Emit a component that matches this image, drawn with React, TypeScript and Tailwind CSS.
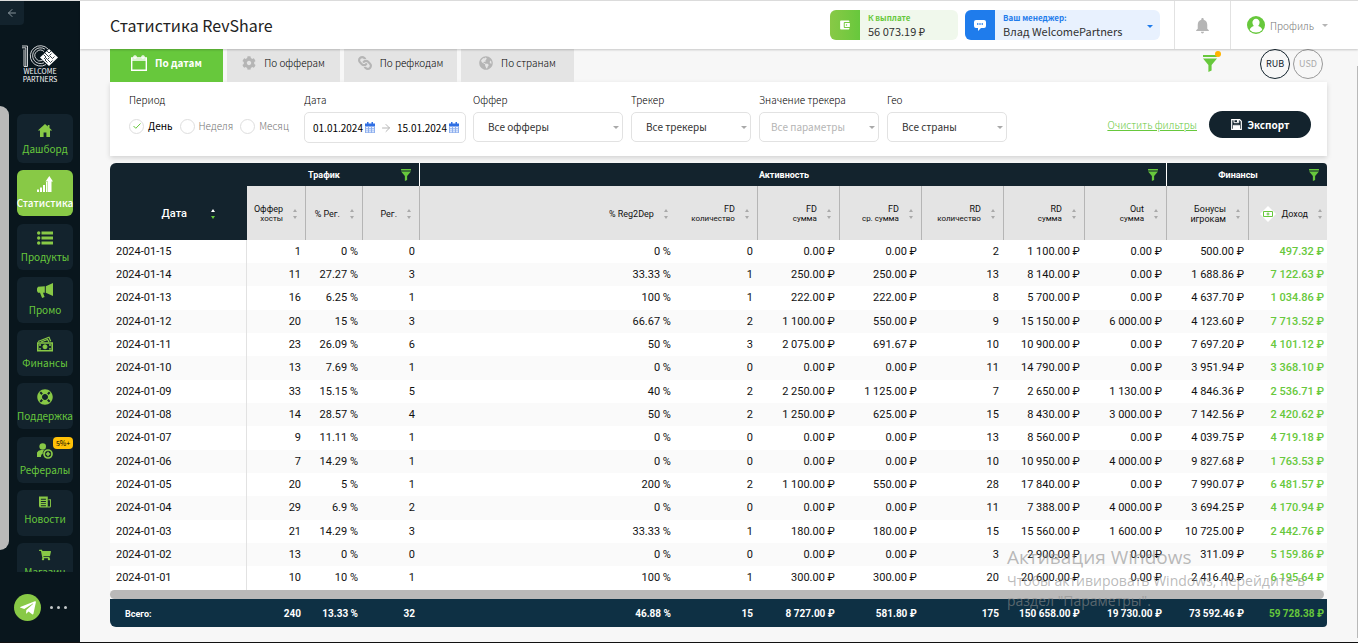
import React, { useState } from 'react';
import { FaCog, FaLink, FaGlobeAmericas, FaShoppingCart, FaTelegramPlane, FaLifeRing } from 'react-icons/fa';
import { IoMdWallet } from 'react-icons/io';
import { MdNotifications } from 'react-icons/md';
import { ArrowLeft, ArrowRight } from 'lucide-react';
import clsx from 'clsx';

type SvgProps = { className?: string };

const FunnelIcon: React.FC<SvgProps> = ({ className }) => (
  <svg viewBox="0 0 14 17" className={className} fill="currentColor">
    <path d="M0 0h14v2H0zM0 3.5h14L8.6 10v5.5L5.4 17v-7z" />
  </svg>
);

const HomeIcon: React.FC<SvgProps> = ({ className }) => (
  <svg viewBox="0 0 16 16" className={className} fill="currentColor">
    <path d="M8 2 .8 8.600H3V15h3.600v-4.500h2.800V15H13V8.600h2.200L12.500 6V3h-1.700v1.500z" />
  </svg>
);

const ListIcon: React.FC<SvgProps> = ({ className }) => (
  <svg viewBox="0 0 16 16" className={className} fill="currentColor">
    <circle cx="1.700" cy="3" r="1.700" />
    <circle cx="1.700" cy="8" r="1.700" />
    <circle cx="1.700" cy="13" r="1.700" />
    <path d="M4.500 1.500H16v3H4.500zM4.500 6.500H16v3H4.500zM4.500 11.500H16v3H4.500z" />
  </svg>
);

const StatsIcon: React.FC<SvgProps> = ({ className }) => (
  <svg viewBox="0 0 16 16" className={className} fill="currentColor">
    <path d="M0 13.500h2V16H0zM3 11.500h2V16H3zM6 9h2v7H6zM9 6h1.500v10H9zM8.500 5.500 12.300 0 16 5.500h-1.500V16h-3.500V5.500z" />
  </svg>
);

const MegaphoneIcon: React.FC<SvgProps> = ({ className }) => (
  <svg viewBox="0 0 16 16" className={className} fill="currentColor">
    <path d="M8.8 3.2 16 0v13L8.8 9.8zM0 5.5l1-1.8 6.8-.5v6.6H6l1.6 4.2-2.5 1L3 9.8H1L0 8z" />
  </svg>
);

const MoneyIcon: React.FC<SvgProps> = ({ className }) => (
  <svg viewBox="0 0 16 15" className={className} fill="none" stroke="currentColor">
    <path d="M1 5 12 .8l1.7 4M4 5.5 10.5 3l1.5 2.6" strokeWidth="1.2" />
    <path d="M.8 6.5h14.4v7.7H.8z" strokeWidth="1.6" />
    <circle cx="8" cy="10.3" r="2" fill="currentColor" />
    <path d="M2 8.5h2M12 8.5h2M2 12.4h2M12 12.4h2" strokeWidth="1.4" />
  </svg>
);

const ReferralIcon: React.FC<SvgProps> = ({ className }) => (
  <svg viewBox="0 0 16 16" className={className} fill="currentColor">
    <circle cx="5.7" cy="3.5" r="3.3" />
    <path d="M0 14V9.5Q1 7 4 7h3q-1.5 2-1.4 4Q4 11 4 14z" />
    <circle cx="11" cy="11" r="4" fill="none" stroke="currentColor" strokeWidth="1.7" />
    <path d="M10.2 8.8h1.6v1.4h1.4v1.6h-1.4v1.4h-1.6v-1.4H8.8v-1.6h1.4z" />
  </svg>
);

const NewsIcon: React.FC<SvgProps> = ({ className }) => (
  <svg viewBox="0 0 13 12" className={className} fill="currentColor">
    <path fillRule="evenodd" d="M0 0h9.5v12H2a2 2 0 0 1-2-2zM2 2.5v1h5.5v-1zM2 5v1h5.5V5zM2 7.3v1h5.5v-1zM2 9.6v1h5.5v-1z" />
    <path d="M10.2 3H13v7.5q0 1.5-1.5 1.5H9.6v-1H12V4h-1.8z" />
  </svg>
);

const ChatIcon: React.FC<SvgProps> = ({ className }) => (
  <svg viewBox="0 0 12 11" className={className} fill="currentColor">
    <path
      fillRule="evenodd"
      d="M2 0h8q2 0 2 2v4q0 2-2 2H7L4 11V8H2Q0 8 0 6V2q0-2 2-2zm1 3.300v1.400h1.400V3.300zm2.300 0v1.400h1.400V3.300zm2.300 0v1.400H9V3.300z"
    />
  </svg>
);

const ProfileIcon: React.FC<SvgProps> = ({ className }) => (
  <svg viewBox="0 0 18 18" className={className}>
    <circle cx="9" cy="9" r="9" fill="#67c83c" />
    <path
      d="M9 2.800a3.600 3.600 0 0 1 3.600 3.800q0 2-1.400 3.400Q15 11.300 15.200 14q-2.400 2.600-6.200 2.600T2.800 14Q3 11.300 6.800 10 5.400 8.600 5.400 6.600A3.600 3.600 0 0 1 9 2.800z"
      fill="#fff"
    />
  </svg>
);

const CalendarIcon: React.FC<SvgProps> = ({ className }) => (
  <svg viewBox="0 0 16 16" className={className} fill="none" stroke="currentColor">
    <path d="M.7 3h14.6v12.3H.7zM.7 5h14.6" strokeWidth="1.4" />
    <circle cx="4" cy="2" r="1.2" strokeWidth="1.2" />
    <circle cx="12" cy="2" r="1.2" strokeWidth="1.2" />
  </svg>
);

const ChainIcon: React.FC<SvgProps> = ({ className }) => <FaLink className={clsx('rotate-90', className)} />;

const DateIcon: React.FC<SvgProps> = ({ className }) => (
  <svg viewBox="0 0 10 11" className={className}>
    <path d="M0 2h10v9H0z" fill="#8fb0ee" />
    <path d="M0 1.5h10V4H0zM2 0h1.5v3H2zM6.5 0H8v3H6.5z" fill="#2f6fe4" />
    <path d="M1 5h2v1.3H1zM4 5h2v1.3H4zM7 5h2v1.3H7zM1 7.2h2v1.3H1zM4 7.2h2v1.3H4zM7 7.2h2v1.3H7zM1 9.3h2v1H1zM4 9.3h2v1H4zM7 9.3h2v1H7z" fill="#eef3ff" />
  </svg>
);

const SaveIcon: React.FC<SvgProps> = ({ className }) => (
  <svg viewBox="0 0 11 11" className={className} fill="none" stroke="#fff">
    <path d="M.7.7h8l1.6 1.6v8H.7z" strokeWidth="1.2" />
    <path d="M3 .7v3h4.7v-3M2.5 10V6.3h6V10" />
    <path d="M6 1h1.4v2H6zM3 7h5v3H3z" fill="#fff" stroke="none" />
  </svg>
);

const Caret: React.FC<SvgProps> = ({ className }) => (
  <svg viewBox="0 0 6 3" className={clsx('w-1.5 h-[3px] shrink-0', className)} fill="currentColor">
    <path d="M0 0h6L3 3z" />
  </svg>
);

const Sorter: React.FC<{ active?: boolean }> = ({ active }) => (
  <svg viewBox="0 0 4 10" className="w-1 h-2.5 shrink-0">
    <path d="M0 3 2 0l2 3z" fill={active ? '#fff' : '#a9a9a9'} />
    <path d="M0 7h4l-2 3z" fill={active ? '#67c83c' : '#a9a9a9'} />
  </svg>
);

const Logo: React.FC = () => (
  <div className="mx-auto w-9 text-white">
    <svg viewBox="0 0 36 22" className="w-9 h-[22px]" fill="none" stroke="currentColor" strokeWidth=".8">
      <path d="M0 1h5.500v20.500M0 2.800h3.800v18.700M2 4.500v17h3.500" />
      <path d="M26 4A10.200 10.200 0 1 0 24 19.500M23 4.200A7.900 7.900 0 1 0 22 17.800M22 6.600A5.400 5.400 0 1 0 20.500 15.500" />
      <path d="m27 4 9 8.500-9 8.500-9-8.500z" fill="currentColor" stroke="none" />
      <path
        d="m25 6 2 2 2-2M23 8l4 4M21.500 9.500l2.500 2.500-2 2M29.500 8.500l-2 2 3 3 2-2M25 13l-2 2 2.500 2.500M27.500 12.500l-2 2 3 3 2-2"
        stroke="#09161d"
      />
    </svg>
    <p className="text-[7px] leading-2 text-center whitespace-nowrap">
      WELCOME
      <br />
      PARTNERS
    </p>
  </div>
);

interface MenuItem {
  label: string;
  icon: React.FC<SvgProps>;
  size: string;
  badge?: string;
}

const menu: MenuItem[] = [
  { label: 'Дашборд', icon: HomeIcon, size: 'w-4 h-4' },
  { label: 'Статистика', icon: StatsIcon, size: 'w-4 h-4' },
  { label: 'Продукты', icon: ListIcon, size: 'w-4 h-4' },
  { label: 'Промо', icon: MegaphoneIcon, size: 'w-4 h-4' },
  { label: 'Финансы', icon: MoneyIcon, size: 'w-4 h-4' },
  { label: 'Поддержка', icon: FaLifeRing, size: 'w-4 h-4' },
  { label: 'Рефералы', icon: ReferralIcon, size: 'w-4 h-4', badge: '5%+' },
  { label: 'Новости', icon: NewsIcon, size: 'w-3 h-3' },
  { label: 'Магазин', icon: FaShoppingCart, size: 'w-3 h-3' }
];

const Sidebar: React.FC = () => (
  <aside className="relative w-20 shrink-0 bg-[#09161d] flex flex-col">
    <button aria-label="Свернуть меню" className="w-6 h-6 bg-[#13232d] text-[#87949b] rounded-br flex items-center justify-center">
      <ArrowLeft className="w-3 h-3" strokeWidth={2} />
    </button>
    <div className="h-[89px] pt-5">
      <Logo />
    </div>
    <div className="absolute left-0 top-[105px] w-[9px] h-[444px] rounded-r-full bg-[#b9b9b9]" />
    <nav className="h-[458px] overflow-hidden pl-[17px]">
      <div className="h-[475px] w-14 flex flex-col justify-between">
        {menu.map(({ label, icon: Icon, size, badge }, i) => (
          <a
            key={label}
            href="#"
            className={clsx(
              'relative shrink-0 rounded-md flex flex-col items-center text-[10px] leading-3 whitespace-nowrap',
              i === 0 ? 'h-[49px] pt-2' : 'h-[46px] pt-1.5',
              i === 1 ? 'bg-[#88c946] text-white font-medium' : 'bg-[#13232d] text-[#67c83c]'
            )}
          >
            <Icon className={clsx('mb-[5px]', size, i === 1 ? 'text-white' : 'text-[#88c946]')} />
            {label}
            {badge && (
              <span className="absolute top-0 right-0 w-5 h-3 rounded-sm bg-[#ffc107] text-black text-[7px] leading-3 text-center">
                {badge}
              </span>
            )}
          </a>
        ))}
      </div>
    </nav>
    <div className="mt-[22px] ml-3.5 flex items-center gap-[7px]">
      <a href="#" aria-label="Telegram" className="w-[27px] h-[27px] rounded-full bg-[#88c946] text-white flex items-center justify-center">
        <FaTelegramPlane className="w-[18px] h-[18px]" />
      </a>
      <button aria-label="Ещё" className="flex gap-1 p-0.5">
        <span className="w-[3px] h-[3px] rounded-full bg-[#c4c8ca]" />
        <span className="w-[3px] h-[3px] rounded-full bg-[#c4c8ca]" />
        <span className="w-[3px] h-[3px] rounded-full bg-[#c4c8ca]" />
      </button>
    </div>
  </aside>
);

const Header: React.FC = () => (
  <header className="relative z-10 h-12 bg-white shadow-[0_1px_2px_rgba(0,0,0,0.2)] pl-[30px] flex items-center">
    <h1 className="text-base leading-6 text-[#222] flex-1">Статистика RevShare</h1>
    <div className="w-32 h-[30px] rounded-md overflow-hidden bg-[#f0f8ec] flex">
      <span className="w-[30px] bg-linear-to-r from-[#88c946] to-[#67c83c] text-white flex items-center justify-center">
        <IoMdWallet className="w-3 h-3" />
      </span>
      <div className="pl-2 pt-0.5">
        <p className="text-[8px] leading-3 font-bold text-[#67c83c]">К выплате</p>
        <p className="text-[11px] leading-[14px] text-[#333]">56 073.19 ₽</p>
      </div>
    </div>
    <button className="ml-[7px] w-[195px] h-[30px] rounded-md overflow-hidden bg-[#e8f1fe] flex text-left">
      <span className="w-[30px] h-full bg-[#1f7cec] text-white flex items-center justify-center">
        <ChatIcon className="w-3 h-[11px]" />
      </span>
      <span className="pl-2 pt-0.5 flex-1">
        <span className="block text-[8px] leading-3 font-bold text-[#1f7cec]">Ваш менеджер:</span>
        <span className="block text-[11px] leading-[14px] text-[#333]">Влад WelcomePartners</span>
      </span>
      <Caret className="self-center mr-[7px] mt-0.5 text-[#1f7cec]" />
    </button>
    <button aria-label="Уведомления" className="ml-3.5 w-[57px] h-full border-x border-[#e2e2e2] text-[#b5b5b5] flex items-center justify-center">
      <MdNotifications className="w-[19px] h-[19px]" />
    </button>
    <button className="w-[127px] h-full pl-4 flex items-center text-[#777] text-[10px] font-light">
      <ProfileIcon className="w-[18px] h-[18px] mr-[5px]" />
      Профиль
      <Caret className="ml-2 text-[#b5b5b5]" />
    </button>
  </header>
);

const tabs = [
  { label: 'По датам', icon: CalendarIcon },
  { label: 'По офферам', icon: FaCog },
  { label: 'По рефкодам', icon: ChainIcon },
  { label: 'По странам', icon: FaGlobeAmericas }
];

const periods = ['День', 'Неделя', 'Месяц'];

const filters = [
  { id: 'offer', label: 'Оффер', value: 'Все офферы', width: 'w-[150px]' },
  { id: 'tracker', label: 'Трекер', value: 'Все трекеры', width: 'w-[120px]' },
  { id: 'param', label: 'Значение трекера', value: 'Все параметры', width: 'w-[120px]', disabled: true },
  { id: 'geo', label: 'Гео', value: 'Все страны', width: 'w-[120px]' }
];

const Filters: React.FC = () => {
  const [period, setPeriod] = useState('День');
  const [range, setRange] = useState({ from: '01.01.2024', to: '15.01.2024' });

  return (
    <section className="bg-white h-[74px] pl-[19px] pr-4 pt-3 flex shadow-[0_2px_5px_rgba(0,0,0,0.15)] text-[10px] font-light text-black">
      <fieldset className="w-[175px] shrink-0">
        <legend className="leading-3 mb-3">Период</legend>
        <div className="flex">
          {periods.map(p => (
            <label
              key={p}
              className={clsx('flex items-center mr-[7px] leading-4 cursor-pointer', period === p ? 'font-normal' : 'text-[#777]')}
            >
              <input
                type="radio"
                name="period"
                checked={period === p}
                onChange={() => setPeriod(p)}
                className="peer sr-only"
              />
              <span className="w-[15px] h-[15px] mr-1 rounded-full border border-[#dedede] flex items-center justify-center">
                {period === p && (
                  <svg viewBox="0 0 8 6" className="w-2 h-1.5" fill="none" stroke="#67c83c">
                    <path d="m.5 3 2.300 2.300L7.500.5" />
                  </svg>
                )}
              </span>
              {p}
            </label>
          ))}
        </div>
      </fieldset>

      <div className="mr-[7px] shrink-0">
        <label htmlFor="from" className="block leading-3 mb-1.5">Дата</label>
        <div className="w-[162px] h-[31px] border border-[#e2e2e2] rounded-[5px] pl-2 flex items-center font-normal">
          <input
            id="from"
            value={range.from}
            onChange={e => setRange({ ...range, from: e.target.value })}
            className="w-[52px] outline-none"
          />
          <DateIcon className="w-2.5 h-[11px]" />
          <ArrowRight className="w-3 h-3 mx-[5px] text-[#b5b5b5]" strokeWidth={2} />
          <input
            aria-label="Дата окончания"
            value={range.to}
            onChange={e => setRange({ ...range, to: e.target.value })}
            className="w-[52px] outline-none"
          />
          <DateIcon className="w-2.5 h-[11px]" />
        </div>
      </div>

      <div className="flex gap-2">
        {filters.map(f => (
          <div key={f.id}>
            <label htmlFor={f.id} className="block leading-3 mb-1.5 whitespace-nowrap">{f.label}</label>
            <div className={clsx('relative', f.width)}>
              <select
                id={f.id}
                disabled={f.disabled}
                className={clsx(
                  'appearance-none w-full h-[30px] pb-0.5 border border-[#e2e2e2] rounded-[5px] bg-white outline-none font-normal opacity-100',
                  f.disabled ? 'pl-[11px] text-[#b5b5b5]' : 'pl-3.5 text-[#333]'
                )}
              >
                <option>{f.value}</option>
              </select>
              <Caret className="absolute right-1 top-3.5 text-[#a9a9a9]" />
            </div>
          </div>
        ))}
      </div>

      <div className="ml-auto h-[60px] flex items-center gap-3">
        <a href="#" className="underline text-[#67c83c] whitespace-nowrap">Очистить фильтры</a>
        <button className="w-[102px] h-[27px] rounded-full bg-[#13232d] text-white font-bold flex items-center justify-center gap-1.5">
          <SaveIcon className="w-[11px] h-[11px]" />
          Экспорт
        </button>
      </div>
    </section>
  );
};

const columns = [
  ['Оффер', 'хосты'],
  ['% Рег.'],
  ['Рег.'],
  ['% Reg2Dep'],
  ['FD', 'количество'],
  ['FD', 'сумма'],
  ['FD', 'ср. сумма'],
  ['RD', 'количество'],
  ['RD', 'сумма'],
  ['Out', 'сумма'],
  ['Бонусы', 'игрокам'],
  ['Доход']
];

const rows = [
  ['2024-01-15', '1', '0 %', '0', '0 %', '0', '0.00 ₽', '0.00 ₽', '2', '1 100.00 ₽', '0.00 ₽', '500.00 ₽', '497.32 ₽'],
  ['2024-01-14', '11', '27.27 %', '3', '33.33 %', '1', '250.00 ₽', '250.00 ₽', '13', '8 140.00 ₽', '0.00 ₽', '1 688.86 ₽', '7 122.63 ₽'],
  ['2024-01-13', '16', '6.25 %', '1', '100 %', '1', '222.00 ₽', '222.00 ₽', '8', '5 700.00 ₽', '0.00 ₽', '4 637.70 ₽', '1 034.86 ₽'],
  ['2024-01-12', '20', '15 %', '3', '66.67 %', '2', '1 100.00 ₽', '550.00 ₽', '9', '15 150.00 ₽', '6 000.00 ₽', '4 123.60 ₽', '7 713.52 ₽'],
  ['2024-01-11', '23', '26.09 %', '6', '50 %', '3', '2 075.00 ₽', '691.67 ₽', '10', '10 900.00 ₽', '0.00 ₽', '7 697.20 ₽', '4 101.12 ₽'],
  ['2024-01-10', '13', '7.69 %', '1', '0 %', '0', '0.00 ₽', '0.00 ₽', '11', '14 790.00 ₽', '0.00 ₽', '3 951.94 ₽', '3 368.10 ₽'],
  ['2024-01-09', '33', '15.15 %', '5', '40 %', '2', '2 250.00 ₽', '1 125.00 ₽', '7', '2 650.00 ₽', '1 130.00 ₽', '4 846.36 ₽', '2 536.71 ₽'],
  ['2024-01-08', '14', '28.57 %', '4', '50 %', '2', '1 250.00 ₽', '625.00 ₽', '15', '8 430.00 ₽', '3 000.00 ₽', '7 142.56 ₽', '2 420.62 ₽'],
  ['2024-01-07', '9', '11.11 %', '1', '0 %', '0', '0.00 ₽', '0.00 ₽', '13', '8 560.00 ₽', '0.00 ₽', '4 039.75 ₽', '4 719.18 ₽'],
  ['2024-01-06', '7', '14.29 %', '1', '0 %', '0', '0.00 ₽', '0.00 ₽', '10', '10 950.00 ₽', '4 000.00 ₽', '9 827.68 ₽', '1 763.53 ₽'],
  ['2024-01-05', '20', '5 %', '1', '200 %', '2', '1 100.00 ₽', '550.00 ₽', '28', '17 840.00 ₽', '0.00 ₽', '7 990.07 ₽', '6 481.57 ₽'],
  ['2024-01-04', '29', '6.9 %', '2', '0 %', '0', '0.00 ₽', '0.00 ₽', '11', '7 388.00 ₽', '4 000.00 ₽', '3 694.25 ₽', '4 170.94 ₽'],
  ['2024-01-03', '21', '14.29 %', '3', '33.33 %', '1', '180.00 ₽', '180.00 ₽', '15', '15 560.00 ₽', '1 600.00 ₽', '10 725.00 ₽', '2 442.76 ₽'],
  ['2024-01-02', '13', '0 %', '0', '0 %', '0', '0.00 ₽', '0.00 ₽', '3', '2 900.00 ₽', '0.00 ₽', '311.09 ₽', '5 159.86 ₽'],
  ['2024-01-01', '10', '10 %', '1', '100 %', '1', '300.00 ₽', '300.00 ₽', '20', '20 600.00 ₽', '0.00 ₽', '2 416.40 ₽', '6 195.64 ₽']
];

const totals = ['240', '13.33 %', '32', '46.88 %', '15', '8 727.00 ₽', '581.80 ₽', '175', '150 658.00 ₽', '19 730.00 ₽', '73 592.46 ₽', '59 728.38 ₽'];

const groups = [
  { label: 'Трафик', span: 3 },
  { label: 'Активность', span: 7 },
  { label: 'Финансы', span: 2 }
];

const StatsTable: React.FC = () => (
  <table className="mt-[7px] w-full table-fixed border-separate border-spacing-0 font-[Roboto,sans-serif] text-[11px] leading-4 text-[#111]">
    <colgroup>
      <col className="w-[137px]" />
      <col className="w-[59px]" />
      <col className="w-[57px]" />
      <col className="w-[57px]" />
      <col />
      <col className="w-[82px]" />
      <col className="w-[82px]" />
      <col className="w-[82px]" />
      <col className="w-[82px]" />
      <col className="w-[81px]" />
      <col className="w-[82px]" />
      <col className="w-[82px]" />
      <col className="w-[78px]" />
    </colgroup>
    <thead>
      <tr className="h-[23px] text-white text-[9px]">
        <th rowSpan={2} className="bg-[#13232d] rounded-tl-md p-0 text-[11px] font-medium">
          <div className="flex items-center justify-end gap-6 pr-8 pt-6">
            Дата
            <Sorter active />
          </div>
        </th>
        {groups.map((g, i) => (
          <th
            key={g.label}
            colSpan={g.span}
            className={clsx('bg-[#13232d] p-0 font-bold', i < 2 ? 'border-r border-white' : 'rounded-tr-sm')}
          >
            <div className="flex items-center pr-2">
              <span className="flex-1">{g.label}</span>
              <FunnelIcon className="w-2.5 h-3 text-[#67c83c]" />
            </div>
          </th>
        ))}
      </tr>
      <tr className="h-[54px] text-[9px] leading-[10px]">
        {columns.map((lines, i) => (
          <th
            key={i}
            className={clsx('bg-[#e4e4e4] px-0 pt-0.5 pb-0 font-normal', i !== 3 && i !== 11 && 'border-r border-[#b5b5b5]')}
          >
            <div className={clsx('flex items-center justify-end gap-2.5', i === 11 ? 'pr-[5px]' : 'pr-2')}>
              {i === 11 && (
                <svg viewBox="0 0 16 16" className="w-4 h-4 -mr-1 shrink-0" fill="none" stroke="#67c83c">
                  <path d="m8 0 8 8-8 8-8-8z" fill="#fff" stroke="none" />
                  <path d="M3.500 5.500h9v5h-9z" />
                  <circle cx="8" cy="8" r="1" />
                </svg>
              )}
              <span className="text-right whitespace-nowrap">
                {lines[0]}
                {lines[1] && <span className={clsx('block', i < 10 && 'text-[8px]')}>{lines[1]}</span>}
              </span>
              <Sorter />
            </div>
          </th>
        ))}
      </tr>
    </thead>
    <tbody>
      {rows.map(row => (
        <tr key={row[0]} className="h-[23px] nth-[3n]:h-6 bg-white even:bg-[#fafafa]">
          {row.map((cell, i) => (
            <td
              key={i}
              className={clsx(
                'py-0 whitespace-nowrap',
                i === 0 && 'pl-1.5 border-r border-[#e2e2e2]',
                i > 0 && 'text-right',
                i > 0 && i < 12 && 'pr-[5px]',
                i === 12 && 'pr-[3px] font-medium text-[#67c83c]'
              )}
            >
              {cell}
            </td>
          ))}
        </tr>
      ))}
    </tbody>
    <tfoot>
      <tr>
        <td colSpan={13} className="p-0">
          <div className="h-[9px] mr-[3px] rounded-full bg-[#b9b9b9]" />
        </td>
      </tr>
      <tr className="h-7 text-white text-[10px] font-bold whitespace-nowrap">
        <th scope="row" className="bg-[#0e3044] rounded-bl-md pt-0.5 pb-0 pl-[15px] text-left text-[9px]">Всего:</th>
        {totals.map((t, i) => (
          <td
            key={i}
            className={clsx('bg-[#0e3044] pt-0.5 pb-0 text-right', i === 11 ? 'pr-[3px] rounded-br-sm text-[#67c83c]' : 'pr-[5px]')}
          >
            {t}
          </td>
        ))}
      </tr>
    </tfoot>
  </table>
);

const App: React.FC = () => {
  const [currency, setCurrency] = useState('RUB');

  return (
    <div className="relative min-h-screen flex bg-[#f7f7f7] border-t border-t-[#dedede] border-b border-b-[#111] font-['Noto_Sans_CJK_SC','Noto_Sans',sans-serif]">
      <Sidebar />
      <div className="flex-1 min-w-0">
        <Header />
        <main className="pl-[30px] pr-[31px]">
          <div className="flex items-center h-[33px]">
            <div className="flex gap-1 h-full">
              {tabs.map(({ label, icon: Icon }, i) => (
                <button
                  key={label}
                  className={clsx(
                    'w-[113px] h-full pb-1.5 flex items-center justify-center gap-2 text-[10px]',
                    i === 0 ? 'bg-[#67c83c] text-white font-bold' : 'bg-[#e4e4e4] text-black font-light'
                  )}
                >
                  <Icon className={clsx(i === 0 ? 'w-4 h-4' : 'w-3.5 h-3.5 text-[#b5b5b5]')} />
                  {label}
                </button>
              ))}
            </div>
            <button aria-label="Фильтры" className="relative ml-auto mr-[43px] -mt-1 text-[#67c83c]">
              <FunnelIcon className="w-3.5 h-[17px]" />
              <span className="absolute -top-1 -right-1 w-1.5 h-1.5 rounded-full bg-[#ffb300]" />
            </button>
            <div className="flex gap-[3px] mr-1 -mt-1">
              {['RUB', 'USD'].map(c => (
                <button
                  key={c}
                  onClick={() => setCurrency(c)}
                  className={clsx(
                    'w-[30px] h-[30px] rounded-full border text-[9px]',
                    currency === c ? 'border-[#13232d] text-[#13232d]' : 'border-[#999] text-[#aaa]'
                  )}
                >
                  {c}
                </button>
              ))}
            </div>
          </div>
          <Filters />
          <StatsTable />
        </main>
      </div>

      {/* Page scrollbar */}
      <div className="absolute right-0 top-[65px] bottom-1 w-px bg-[#b9b9b9]" />

      {/* System watermark */}
      <div className="absolute right-[49px] bottom-[31px] w-[302px] pointer-events-none font-['Open_Sans',sans-serif] text-[#8c8c8c]/60 whitespace-nowrap">
        <p className="text-[19px] leading-7">Активация Windows</p>
        <p className="text-sm leading-5">
          Чтобы активировать Windows, перейдите в
          <br />
          раздел "Параметры".
        </p>
      </div>
    </div>
  );
};

export default App;
